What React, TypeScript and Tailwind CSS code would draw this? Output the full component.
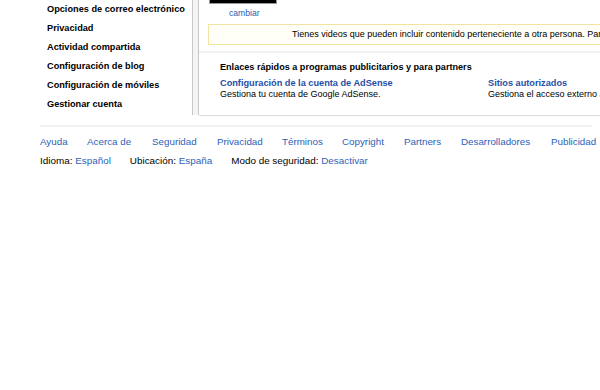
const sideLinks = [
  "Opciones de correo electrónico",
  "Privacidad",
  "Actividad compartida",
  "Configuración de blog",
  "Configuración de móviles",
  "Gestionar cuenta",
];

const footerLinks = [
  { label: "Ayuda", x: 40 },
  { label: "Acerca de", x: 87 },
  { label: "Seguridad", x: 152 },
  { label: "Privacidad", x: 217 },
  { label: "Términos", x: 282 },
  { label: "Copyright", x: 342 },
  { label: "Partners", x: 404 },
  { label: "Desarrolladores", x: 461 },
  { label: "Publicidad", x: 551 },
];

export default function App() {
  return (
    <div className="h-[390px] w-[600px] overflow-hidden bg-white font-['Liberation_Sans',Arial,sans-serif] text-black">
      <div className="flex h-[116px]">
        <ul className="w-[192px] shrink-0 pl-[47px]">
          {sideLinks.map((link) => (
            <li className="h-[19px] whitespace-nowrap text-[9.2px] font-bold leading-[19px]" key={link}>
              {link}
            </li>
          ))}
        </ul>
        <div className="h-[115px] w-[7px] shrink-0 border-x border-[#c8c8c8] bg-[#f4f4f4]" />
        <div className="min-w-0 flex-1 overflow-hidden border-b border-[#dcdcdc]">
          <div className="ml-[10px] h-[4px] w-[68px] border-x border-b border-[#9a9a9a] bg-black" />
          <div className="ml-[30px] mt-[4px] text-[8.6px] leading-[10px] text-[#2a5db0]">cambiar</div>
          <div className="ml-[9px] mt-[6px] flex h-[21px] w-[520px] items-center border border-[#f3e3a0] bg-[#fffff7] pl-[83px] whitespace-nowrap text-[9px]">
            Tienes videos que pueden incluir contenido perteneciente a otra persona. Para más información
          </div>
          <div className="mt-[6px] h-[2px] w-full bg-[#f2f2f2]" />
          <div className="ml-[21px] mt-[8px] whitespace-nowrap text-[9.1px] font-bold leading-[12px]">
            Enlaces rápidos a programas publicitarios y para partners
          </div>
          <div className="ml-[21px] mt-[5px] flex whitespace-nowrap text-[9px] leading-[11px]">
            <div className="w-[268px] shrink-0">
              <div className="text-[9.2px] font-bold text-[#1f4fa6]">Configuración de la cuenta de AdSense</div>
              <div>Gestiona tu cuenta de Google AdSense.</div>
            </div>
            <div className="shrink-0">
              <div className="text-[9.2px] font-bold text-[#1f4fa6]">Sitios autorizados</div>
              <div>Gestiona el acceso externo a tu cuenta</div>
            </div>
          </div>
        </div>
      </div>
      <div className="ml-[40px] mt-[9px] h-[2px] w-[552px] bg-[#f0f0f0]" />
      <div className="relative mt-[9px] h-[12px] whitespace-nowrap text-[9.8px] leading-[12px] text-[#2d5fba]">
        {footerLinks.map((link) => (
          <a className="absolute top-0" key={link.label} style={{ left: link.x }}>
            {link.label}
          </a>
        ))}
      </div>
      <div className="ml-[40px] mt-[7px] flex gap-[19px] whitespace-nowrap text-[9.9px] leading-[12px]">
        <span>
          Idioma: <span className="text-[#2d5fba]">Español</span>
        </span>
        <span>
          Ubicación: <span className="text-[#2d5fba]">España</span>
        </span>
        <span>
          Modo de seguridad: <span className="text-[#2d5fba]">Desactivar</span>
        </span>
      </div>
    </div>
  );
}
